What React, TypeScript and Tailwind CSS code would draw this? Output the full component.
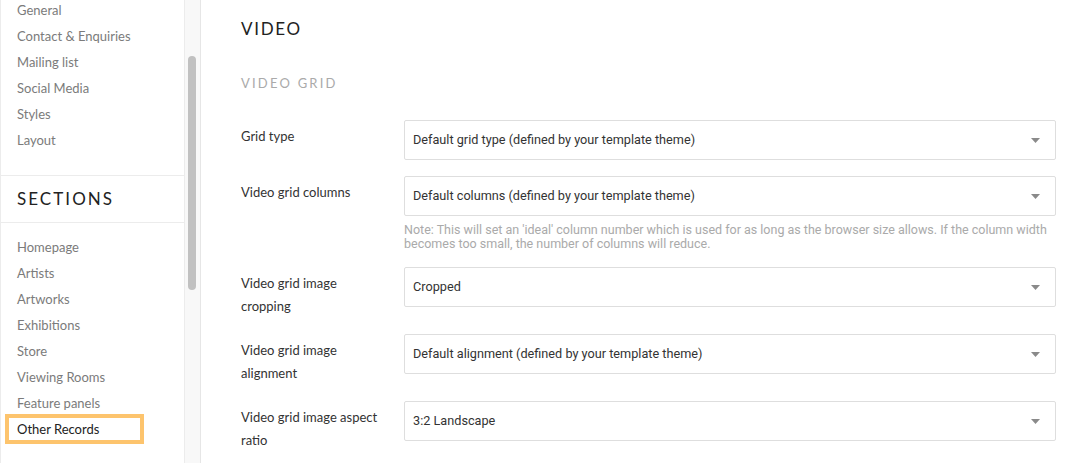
import React from 'react';

const settingsLinks = ['General', 'Contact & Enquiries', 'Mailing list', 'Social Media', 'Styles', 'Layout'];
const sectionLinks = ['Homepage', 'Artists', 'Artworks', 'Exhibitions', 'Store', 'Viewing Rooms', 'Feature panels'];

type Field = { label: React.ReactNode; value: string; note?: string };

const fields: Field[] = [
    { label: 'Grid type', value: 'Default grid type (defined by your template theme)' },
    {
        label: 'Video grid columns',
        value: 'Default columns (defined by your template theme)',
        note: "Note: This will set an 'ideal' column number which is used for as long as the browser size allows. If the column width becomes too small, the number of columns will reduce.",
    },
    { label: <>Video grid image<br />cropping</>, value: 'Cropped' },
    { label: <>Video grid image<br />alignment</>, value: 'Default alignment (defined by your template theme)' },
    { label: <>Video grid image aspect<br />ratio</>, value: '3:2 Landscape' },
];

const SelectBox: React.FC<{ value: string }> = ({ value }) => (
    <div className="flex h-[40px] w-[652px] items-center justify-between rounded-[2px] border border-[#dedede] bg-white pl-[8px] pr-[15px]">
        <span className="font-['Roboto',sans-serif] text-[12.7px] text-[#333]">{value}</span>
        <svg width="9" height="5" viewBox="0 0 9 5" className="mt-[1px]">
            <path d="M0 0h9L4.5 5z" fill="#8a8a8a" />
        </svg>
    </div>
);

const Sidebar: React.FC = () => (
    <aside className="flex h-full w-[201px] shrink-0 border-r border-[#e6e6e6] font-['Lato',sans-serif]">
        <div className="h-full w-[185px] overflow-hidden border-l border-r border-[#ececec]">
            <div className="-mt-[3px]">
                <ul className="pb-[22px]">
                    {settingsLinks.map(link => (
                        <li key={link} className="h-[26px] pl-[16px] text-[13px] leading-[26px] text-[#7b7b7b]">{link}</li>
                    ))}
                </ul>
                <div className="flex h-[48px] items-center border-y border-[#ececec] pl-[16px] text-[17px] tracking-[0.12em] text-[#222]">
                    SECTIONS
                </div>
                <ul className="pt-[11px]">
                    {sectionLinks.map(link => (
                        <li key={link} className="h-[26px] pl-[16px] text-[13px] leading-[26px] text-[#7b7b7b]">{link}</li>
                    ))}
                    <li className="-my-[2px] ml-[4px] h-[30px] w-[139px] border-4 border-[#fdc46d] pl-[8px] text-[13px] leading-[22px] text-[#222]">
                        Other Records
                    </li>
                </ul>
            </div>
        </div>
        <div className="h-full w-[15px] bg-[#f8f8f8] pl-[3px] pt-[56px]">
            <div className="h-[234px] w-[8px] rounded-full bg-[#c1c1c1]" />
        </div>
    </aside>
);

export default function App() {
    return (
        <div className="flex h-[463px] w-[1076px] overflow-hidden bg-white">
            <Sidebar />
            <main className="flex-1 pl-[40px] pt-[17px] font-['Lato',sans-serif]">
                <h1 className="text-[17px] leading-[24px] tracking-[0.1em] text-[#222]">VIDEO</h1>
                <h2 className="mt-[32px] text-[13px] leading-[20px] tracking-[0.17em] text-[#aaa]">VIDEO GRID</h2>
                <div className="mt-[27px] flex flex-col gap-[16px]">
                    {fields.map((field, i) => (
                        <div key={i} className="flex">
                            <div className="w-[163px] shrink-0 pt-[5px] text-[13px] leading-[23px] text-[#333]">{field.label}</div>
                            <div>
                                <SelectBox value={field.value} />
                                {field.note && (
                                    <p className="mt-[7px] w-[652px] font-['Roboto',sans-serif] text-[12.5px] leading-[14px] text-[#aaa]">{field.note}</p>
                                )}
                            </div>
                        </div>
                    ))}
                </div>
            </main>
        </div>
    );
}
